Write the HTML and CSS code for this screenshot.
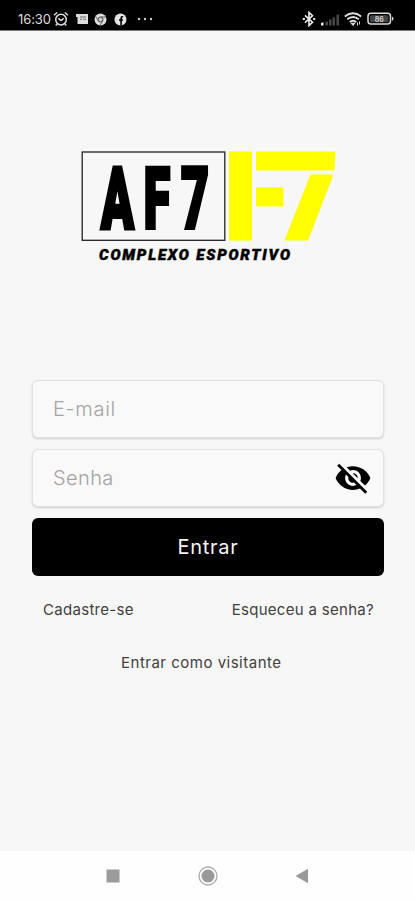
FILE: index.html
```html
<!DOCTYPE html>
<html lang="pt-BR">
<head>
<meta charset="utf-8">
<meta name="viewport" content="width=device-width">
<title>AF7 Complexo Esportivo</title>
<link rel="stylesheet" href="styles.css">
</head>
<body>
<header class="status">
  <div class="status-left">
    <span class="clock">16:30</span>
    <svg class="alarm" width="16" height="16" viewBox="0 0 16 16" fill="none" stroke="#ddd" stroke-width="1.5"><circle cx="8" cy="8.6" r="5.3"/><path d="M1 4.2 4.2 1.5M15 4.2 11.8 1.5M5.4 7.4 8 9.6l2.7-2.2M4 13l-1.2 1.5M12 13l1.2 1.5"/></svg>
    <svg class="news" width="12" height="12" viewBox="0 0 12 12"><path fill="#ddd" d="M0 1h12v10H1.5V4H0z"/><path d="M4 4h6M4 6.3h2M7.2 6.3H10" stroke="#666" stroke-width="1.1"/></svg>
    <svg class="chrome" width="13" height="13" viewBox="0 0 13 13"><circle cx="6.5" cy="6.5" r="6" fill="#ddd"/><circle cx="6.5" cy="6.5" r="2.5" fill="#ccc" stroke="#444"/><path d="M6.5 4H12M4.3 7.8 1.7 3.5M8.7 7.8 6.2 12" stroke="#555" stroke-width=".9"/></svg>
    <svg class="facebook" width="13" height="13" viewBox="0 0 13 13"><circle cx="6.5" cy="6.5" r="6" fill="#e5e5e5"/><path d="M9.2 3.7H8.3Q7.1 3.7 7.1 5v7.5M5 7h4" fill="none" stroke="#000" stroke-width="1.6"/></svg>
    <svg class="dots" width="16" height="4" viewBox="0 0 16 4" fill="#ccc"><circle cx="2" cy="2" r="1.2"/><circle cx="8" cy="2" r="1.2"/><circle cx="14" cy="2" r="1.2"/></svg>
  </div>
  <div class="status-right">
    <svg width="14" height="16" viewBox="0 0 14 16" fill="none" stroke="#eee" stroke-width="1.6"><path d="m3 4.4 7.5 6.8L7 14.6V1.4l3.5 3.4L3 11.6"/><path d="M.8 8h2M11.2 8h2" stroke-width="1.8"/></svg>
    <svg class="signal" width="19" height="13" viewBox="0 0 19 13" fill="#484848"><path fill="#eee" d="M0 12.5V10l2.5-.7v3.2z"/><path d="M4.5 8.5H7v4H4.5zM8 6.5h2.5v6H8zM11.5 4.5H14v8h-2.5zM15.5 1.5H18v11h-2.5z"/></svg>
    <svg class="wifi" width="18" height="14" viewBox="0 0 18 14" fill="none" stroke="#ddd" stroke-width="1.8"><path d="M.8 4.5Q9-2 17.2 4.5M3.2 7.3q5.8-4.6 11.6 0M5.7 10q3.3-2.6 6.6 0"/><path d="m7 11.2 2 2.3 2-2.3zM13.5 10.5v3M15.5 9.5v3" fill="#ddd" stroke-width="1"/></svg>
    <svg class="battery" width="28" height="14" viewBox="0 0 28 14"><rect x="1" y="1.3" width="22.5" height="10.8" rx="3" fill="none" stroke="#ddd" stroke-width="1.5"/><path d="M25 4.5q3 2.2 0 4.5z" fill="#ddd"/><rect x="3" y="3.2" width="18.5" height="7" rx="1.5" fill="#454545"/><text class="charge" x="12.3" y="9.6" text-anchor="middle">86</text></svg>
  </div>
</header>
<main class="login">
  <svg class="logo" width="258" height="116" viewBox="80 149 258 116" role="img" aria-label="AF7 Complexo Esportivo">
    <rect x="82.2" y="152" width="142.6" height="88.3" fill="none" stroke="#222" stroke-width="1.3"/>
    <text class="brand" transform="translate(0 227.5) scale(.56 1)" x="180.5 256.5 323" y="0">AF7</text>
    <path fill="#ff0" d="M229 151.5h23V240.5H229zM256 151.5h79.5L334.500 170.5H256zM256 187.5h27.500v19H256zM310.5 174.5h23L308 240.5H284.500z"/>
    <text class="tagline" x="99" y="260" textLength="191" lengthAdjust="spacing">COMPLEXO ESPORTIVO</text>
  </svg>
  <form class="form">
    <div class="field"><span class="email">E-mail</span></div>
    <div class="field"><span>Senha</span>
      <svg class="eye" width="38" height="38" viewBox="0 0 24 24"><path d="M12 7c2.760 0 5 2.240 5 5 0 .650-.130 1.260-.360 1.830l2.920 2.920c1.510-1.260 2.700-2.890 3.430-4.750-1.730-4.390-6-7.500-11-7.500-1.400 0-2.740.250-3.980.700l2.160 2.160C10.740 7.130 11.350 7 12 7zM2 4.270l2.280 2.280.46.460C3.080 8.300 1.780 10.020 1 12c1.730 4.390 6 7.500 11 7.500 1.550 0 3.030-.300 4.380-.840l.42.420L19.730 22 21 20.730 3.270 3 2 4.270zM7.530 9.800l1.550 1.550c-.05.210-.08.430-.08.650 0 1.660 1.340 3 3 3 .22 0 .44-.03.650-.08l1.550 1.550c-.67.330-1.410.530-2.200.530-2.760 0-5-2.240-5-5 0-.790.200-1.530.530-2.200zm4.310-.780 3.150 3.150.02-.16c0-1.660-1.340-3-3-3l-.17.010z"/></svg>
    </div>
    <button class="submit" type="button">Entrar</button>
  </form>
  <div class="links"><a class="register">Cadastre-se</a><a class="forgot">Esqueceu a senha?</a></div>
  <a class="guest">Entrar como visitante</a>
</main>
<nav class="navbar">
  <svg width="14" height="14"><rect x=".5" y=".5" width="13" height="13" fill="#9c9c9c"/></svg>
  <svg width="20" height="20"><circle cx="10" cy="10" r="9" fill="none" stroke="#aaa" stroke-width="1.3"/><circle cx="10" cy="10" r="6.5" fill="#999"/></svg>
  <svg width="14" height="16"><path d="M.5 8 13 .8v14.4z" fill="#999"/></svg>
</nav>
</body>
</html>
```
FILE: styles.css
```css
* { box-sizing: border-box; }
body {
  margin: 0;
  height: 900px;
  display: flex;
  flex-direction: column;
  overflow: hidden;
  background: #f7f7f7;
  color: #404040;
  font-family: Inter, "Liberation Sans", sans-serif;
}
.status {
  height: 31px;
  flex: none;
  background: #000;
  border-bottom: 1px solid #777;
  display: flex;
  justify-content: space-between;
  padding: 8px 20px 0 18px;
}
.status-left, .status-right { display: flex; align-items: center; height: 22px; }
.status svg { flex: none; }
.clock { width: 35px; color: #ddd; font-size: 13px; letter-spacing: -.1px; white-space: nowrap; }
.news { margin-left: 7px; }
.chrome { margin-left: 6px; }
.facebook { margin-left: 7px; }
.dots { margin-left: 10px; }
.signal { margin-left: 5px; }
.wifi { margin-left: 4px; }
.battery { margin-left: 5px; }
.charge { fill: #ccc; font-size: 7px; font-weight: 700; }
.login { flex: 1; display: flex; flex-direction: column; padding: 118px 31px 0 32px; }
.logo { margin-left: 48px; flex: none; overflow: visible; }
.brand { font-family: Roboto, sans-serif; font-size: 86px; font-weight: 900; fill: #000; stroke: #000; stroke-width: 4px; }
.tagline { font-family: Roboto, sans-serif; font-size: 15px; font-weight: 900; font-style: italic; fill: #000; stroke: #000; stroke-width: .5px; }
.form { margin-top: 115px; display: flex; flex-direction: column; gap: 11px; }
.field {
  height: 58px;
  border: 1px solid #e2e2e2;
  border-radius: 6px;
  background: #f9f9f9;
  box-shadow: 0 1px 2px #ccc;
  display: flex;
  align-items: center;
  justify-content: space-between;
  padding: 0 11px 0 20px;
  color: #a3a3a3;
  font-size: 20px;
  font-weight: 300;
  letter-spacing: .4px;
}
.email { letter-spacing: .7px; }
.submit {
  height: 58px;
  border: 0;
  border-radius: 6px;
  background: #000;
  color: #f4f4f4;
  font: 400 20px Inter, sans-serif;
  letter-spacing: .7px;
  padding: 0 0 1px;
}
.links { display: flex; justify-content: space-between; padding: 0 10px 0 11px; margin-top: 24px; }
.links, .guest { font-size: 15px; line-height: 20px; letter-spacing: .3px; }
.guest { margin: 33px 0 0 89px; letter-spacing: .5px; }
.navbar { height: 49px; flex: none; background: #fefefe; display: flex; align-items: center; justify-content: space-between; padding: 0 106px; }
```
